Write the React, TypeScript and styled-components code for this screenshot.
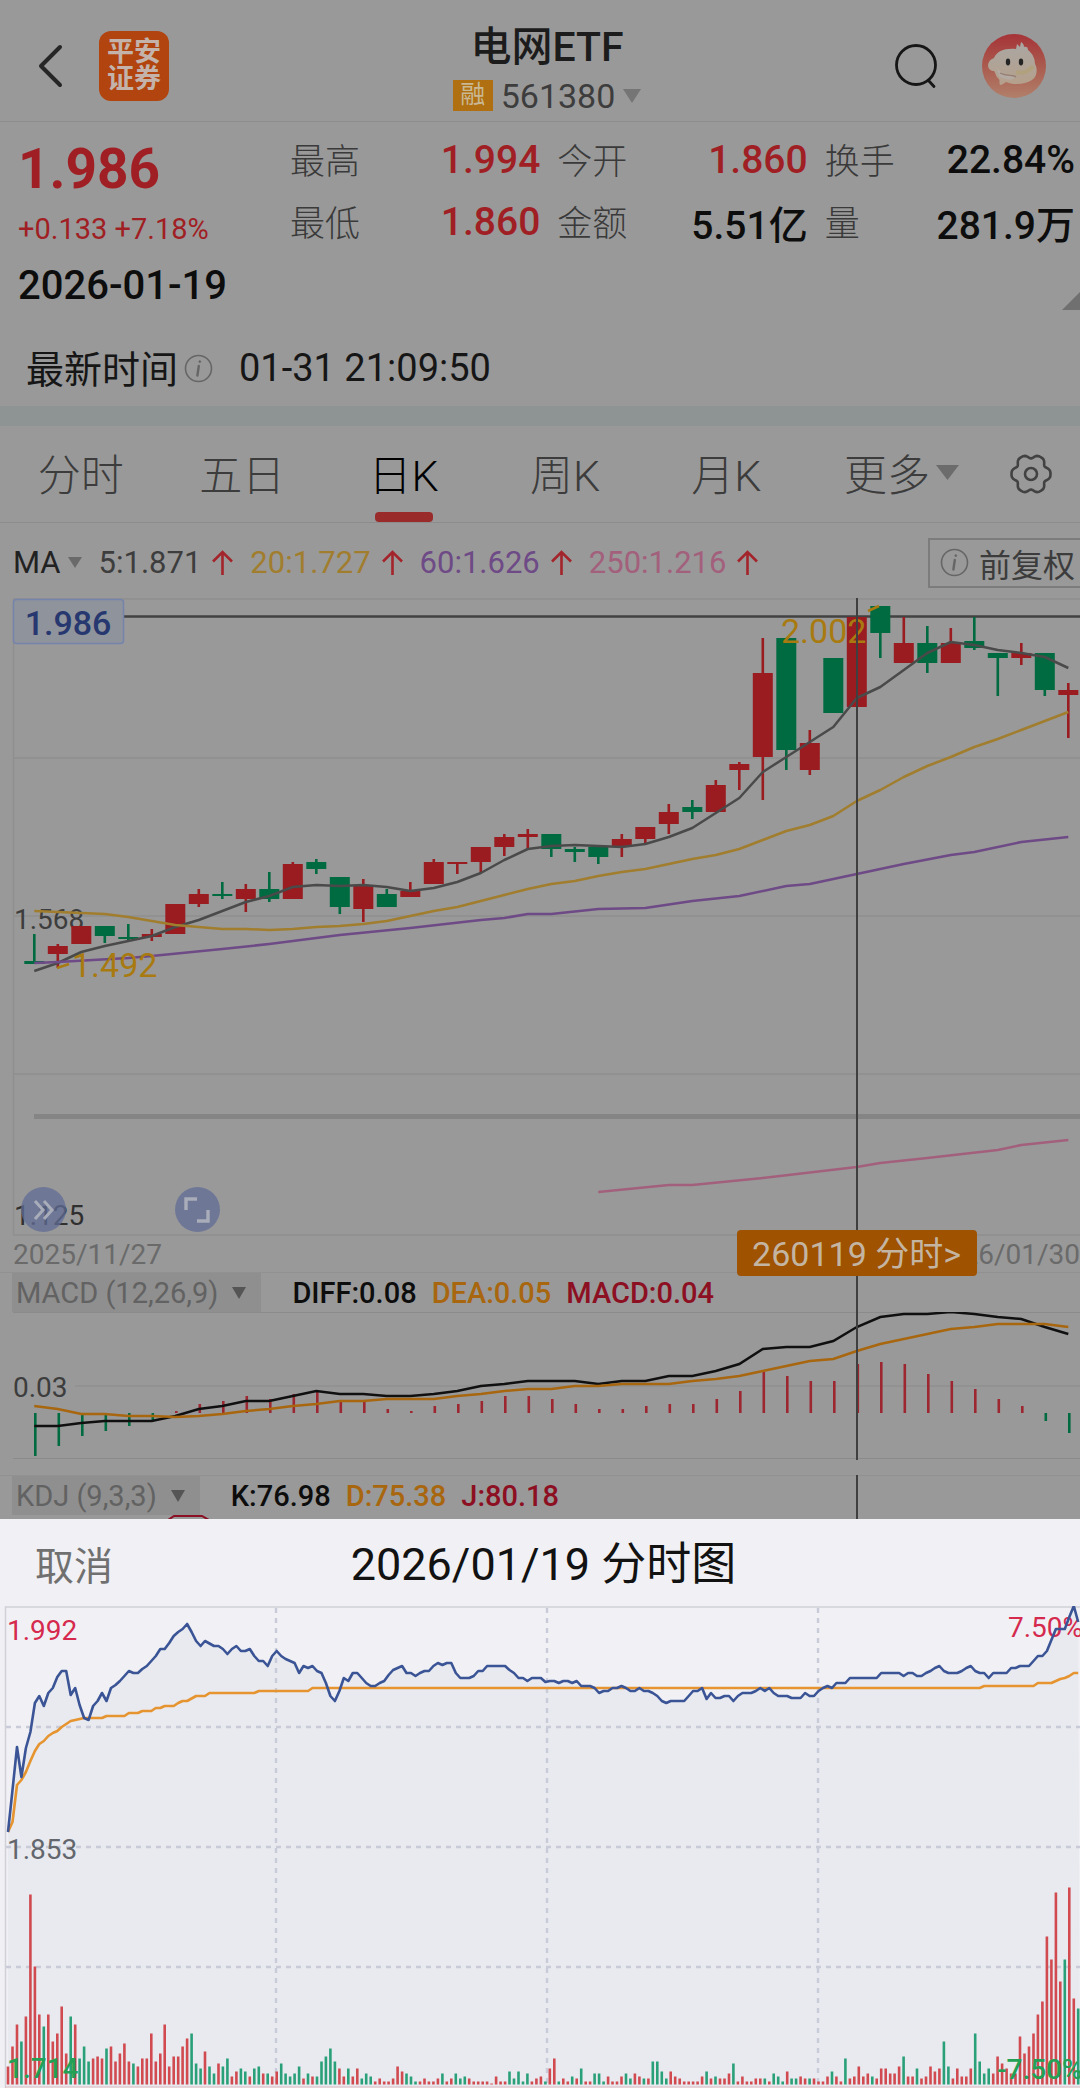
import React from "react";
import styled, { createGlobalStyle, css } from "styled-components";

const color = {
  page: "#999999",
  line: "#8c8c8c",
  ink: "#0d0d0d",
  muted: "#3c3c3c",
  rise: "#9a1c20",
  riseText: "#a01f24",
  fall: "#006b40",
  ma5: "#4a4a4a",
  ma20: "#a17d2e",
  ma60: "#6e4a86",
  ma250: "#a3607c",
  mark: "#a87a10",
  dea: "#a8660f",
  macd: "#8c0f22",
  sheet: "#f1f1f5",
};

const GlobalStyle = createGlobalStyle`
  * { box-sizing: border-box; }
  body {
    margin: 0;
    background: ${color.sheet};
    font-family: Roboto, "Noto Sans CJK SC", sans-serif;
    color: ${color.ink};
  }
  button, select {
    margin: 0;
    padding: 0;
    border: 0;
    background: none;
    color: inherit;
    font: inherit;
    cursor: pointer;
  }
  svg { display: block; }
  h1, h2, p, dl, dt, dd { margin: 0; font-weight: 400; }
`;

/* ---------- market data ---------- */

type Candle = ["R" | "G", number, number, number, number];

// direction, high, body top, body bottom, low
const candles: Candle[] = [
  ["G", 934, 961, 964, 964], ["R", 944, 946, 954, 968], ["R", 926, 926, 944, 944],
  ["G", 926, 926, 936, 943], ["G", 924, 937, 939, 941], ["R", 929, 934, 937, 941],
  ["R", 904, 904, 934, 934], ["R", 889, 894, 904, 907], ["G", 882, 894, 896, 899],
  ["R", 884, 889, 899, 912], ["G", 872, 889, 899, 902], ["R", 862, 864, 899, 899],
  ["G", 859, 862, 869, 874], ["G", 877, 877, 907, 914], ["R", 879, 886, 909, 922],
  ["G", 889, 894, 907, 907], ["R", 882, 891, 897, 897], ["R", 859, 862, 884, 884],
  ["R", 862, 862, 864, 874], ["R", 847, 847, 862, 873], ["R", 834, 837, 847, 856],
  ["R", 829, 834, 837, 849], ["G", 834, 834, 849, 857], ["G", 847, 849, 852, 862],
  ["G", 847, 847, 857, 864], ["R", 834, 839, 847, 857], ["R", 827, 827, 839, 843],
  ["R", 804, 812, 824, 834], ["G", 800, 807, 812, 819], ["R", 780, 785, 812, 812],
  ["R", 762, 764, 770, 790], ["R", 638, 673, 757, 800], ["G", 638, 638, 750, 770],
  ["R", 730, 743, 770, 775], ["G", 658, 658, 713, 713], ["R", 617, 617, 707, 707],
  ["G", 606, 606, 633, 658], ["R", 617, 643, 663, 663], ["G", 626, 643, 663, 673],
  ["R", 628, 643, 663, 663], ["G", 617, 641, 648, 650], ["G", 653, 653, 658, 696],
  ["R", 643, 653, 658, 665], ["G", 653, 653, 690, 696], ["R", 683, 690, 695, 738],
];

const ma5 = [
  971, 963, 952, 946, 941, 936, 927, 920, 911, 902, 896, 887, 885, 886, 885, 887, 891, 888,
  882, 873, 860, 849, 846, 845, 846, 847, 844, 837, 828, 813, 798, 772, 757, 742, 727, 698,
  687, 670, 653, 642, 645, 650, 653, 657, 668,
];
const ma20 = [
  911, 912, 913, 914, 917, 921, 925, 927, 929, 929, 930, 929, 927, 926, 924, 921, 916, 911,
  907, 901, 895, 889, 884, 881, 876, 872, 869, 864, 859, 855, 849, 840, 831, 825, 816, 801,
  790, 777, 766, 757, 747, 739, 730, 721, 712,
];
const ma60: [number, number][] = [
  [0, 963], [1, 962], [4, 958], [5, 956], [8, 949], [10, 944], [13, 935], [16, 928], [19, 920],
  [20, 918], [21, 914], [22, 914], [24, 909], [26, 908], [28, 901], [30, 896], [32, 886],
  [33, 884], [35, 874], [37, 864], [39, 855], [40, 852], [42, 842], [44, 837],
];
const ma250: [number, number][] = [
  [24, 1192], [27, 1185], [28, 1185], [31, 1178], [35, 1167], [36, 1163], [38, 1158],
  [41, 1150], [42, 1145], [44, 1140],
];
const macdBars = [
  1456, 1446, 1436, 1431, 1426, 1420, 1411, 1404, 1401, 1396, 1399, 1394, 1391, 1401, 1401,
  1409, 1411, 1406, 1404, 1401, 1396, 1396, 1399, 1404, 1409, 1409, 1406, 1404, 1404, 1399,
  1391, 1372, 1376, 1381, 1381, 1364, 1362, 1364, 1374, 1381, 1389, 1399, 1406, 1421, 1433,
];
const diff = [
  1426, 1426, 1423, 1421, 1421, 1421, 1416, 1409, 1406, 1401, 1401, 1396, 1391, 1394, 1394,
  1396, 1396, 1394, 1391, 1386, 1384, 1381, 1381, 1381, 1384, 1381, 1381, 1376, 1376, 1371,
  1364, 1349, 1347, 1347, 1341, 1327, 1317, 1314, 1314, 1312, 1314, 1317, 1319, 1327, 1334,
];
const dea = [
  1406, 1409, 1414, 1414, 1416, 1416, 1417, 1416, 1414, 1411, 1409, 1406, 1404, 1401, 1401,
  1399, 1399, 1399, 1396, 1394, 1391, 1389, 1389, 1386, 1386, 1384, 1384, 1384, 1381, 1379,
  1376, 1371, 1366, 1361, 1359, 1351, 1344, 1339, 1334, 1329, 1327, 1324, 1324, 1324, 1327,
];

// minute:level pairs
const parse = (s: string): [number, number][] =>
  s.trim().split(/\s+/).map((p) => p.split(":").map(Number) as [number, number]);

const price = parse(`
0:1832 1:1790 2:1747 3:1777 4:1748 5:1732 6:1703 7:1696 8:1706 9:1693 10:1688 11:1677 12:1671
13:1671 14:1695 15:1688 16:1705 17:1718 18:1720 19:1706 20:1701 21:1693 22:1701 23:1688 24:1685
25:1681 26:1676 27:1671 28:1673 29:1673 30:1669 31:1666 32:1661 33:1656 34:1649 35:1649 36:1643
37:1636 38:1632 39:1629 40:1624 41:1632 42:1641 43:1646 44:1641 46:1646 47:1646 48:1649 49:1654
50:1649 51:1646 52:1651 53:1651 54:1649 55:1656 56:1661 57:1661 58:1666 59:1656 60:1651 61:1656
62:1659 63:1661 64:1663 65:1673 66:1666 67:1668 68:1666 69:1671 70:1673 71:1683 72:1696 73:1701
74:1691 75:1678 76:1681 77:1673 78:1673 79:1678 80:1683 81:1686 82:1686 83:1683 84:1681 85:1675
86:1670 87:1668 88:1666 89:1673 90:1673 91:1676 92:1673 93:1671 94:1671 95:1666 96:1663 97:1665
98:1663 99:1663 100:1673 101:1678 103:1678 104:1676 105:1671 106:1671 107:1666 111:1666 112:1670
113:1673 114:1678 115:1678 116:1681 117:1678 119:1678 120:1682 121:1681 122:1681 123:1683
124:1681 125:1681 126:1683 127:1681 128:1686 130:1686 131:1688 132:1693 133:1691 134:1691
135:1688 136:1688 137:1686 138:1688 139:1691 140:1691 141:1688 142:1691 143:1691 144:1693
145:1696 146:1701 147:1703 148:1701 151:1701 152:1696 153:1691 154:1691 155:1688 156:1699
157:1693 158:1698 159:1698 160:1696 161:1696 162:1701 163:1696 164:1693 166:1693 167:1691
168:1688 169:1691 170:1688 171:1693 172:1696 174:1696 175:1698 177:1698 178:1693 179:1696
180:1696 181:1691 182:1688 183:1686 184:1688 185:1683 187:1683 188:1678 194:1678 195:1673
199:1673 200:1676 201:1673 202:1673 203:1676 204:1676 205:1673 206:1671 207:1668 208:1666
209:1671 210:1673 212:1673 213:1671 214:1668 215:1666 216:1671 217:1673 218:1673 219:1678
220:1673 223:1673 224:1668 225:1668 226:1666 228:1666 229:1661 230:1656 231:1656 232:1651
233:1640 234:1629 236:1629 237:1617 238:1606 239:1622`);

const average = parse(`
0:1832 1:1822 2:1785 3:1780 4:1772 5:1761 6:1751 7:1744 8:1741 9:1736 10:1733 11:1731 12:1727
13:1724 14:1721 15:1720 17:1718 21:1718 22:1716 26:1716 27:1713 29:1713 30:1711 32:1711 33:1708
34:1708 35:1706 37:1706 38:1703 39:1701 40:1701 42:1696 44:1696 45:1693 55:1693 56:1691 67:1691
68:1688 217:1688 218:1686 229:1686 230:1683 233:1683 234:1681 235:1679 236:1678 237:1676
238:1673 239:1673`);

const volume = `
R18 R38 R60 G43 R68 R190 R118 R70 G58 R70 R43 R51 R78 R31 G68 R60 G26 G38 G23 R26 R28 R26 G36
R38 R23 R31 R41 R23 G21 R18 R26 R26 R51 R23 R31 R60 R18 R28 R28 R38 R46 G51 G21 G16 R33 G18 G11
R21 G18 G26 R8 R13 G16 G13 R8 G16 G18 R11 G11 R8 R13 G21 G11 G8 G11 G18 R6 G11 R8 G8 G23 G28
G36 G23 R16 R8 G16 R8 R16 G6 G11 G8 R3 R6 R3 R3 R6 R18 R13 G11 G8 G3 R3 R6 R3 R3 R6 G11 R3 R6
G11 G6 G8 R6 R3 R3 R3 R3 R1 R8 R3 R3 G13 G6 G13 G3 G11 R3 R6 R8 G3 R16 R26 G3 R6 R3 G8 R6 G16
R3 R3 G11 G11 G3 R8 R3 R3 R8 G11 G6 R11 R8 G6 R6 G23 G23 G13 G6 R13 R8 R6 R3 R3 R3 R3 R8 G13 R6
G8 R6 R6 R11 G21 R3 R8 R3 R3 R6 R6 G6 R3 G11 G8 G3 R13 G6 G6 R8 R6 G6 R6 R3 R3 R8 G13 R8 R3 G26
R6 R8 R18 R8 R11 G8 R6 R16 R16 R11 R11 R18 G28 R8 R8 G16 R6 R8 R18 R13 R16 G43 G18 R6 R16 R8 R8
R16 G51 G23 G11 G16 R11 R28 R21 R16 R11 R11 R48 R31 R38 R51 R70 R83 R148 R125 R192 R103 G125
R197 R86 G76`.trim().split(/\s+/);

const DAY = 23.5;
const MINUTE = 4.478;
const dayX = (i: number) => 34.3 + i * DAY;
const minuteX = (k: number) => 8 + k * MINUTE;
const indexed = (ys: number[]) => ys.map((y, i) => [i, y] as [number, number]);
const points = (data: [number, number][], x: (i: number) => number) =>
  data.map(([i, y]) => `${x(i).toFixed(1)},${y}`).join(" ");

const gearPath = (() => {
  const out: string[] = [];
  for (let a = 0; a < 360; a += 5) {
    const t = (a * Math.PI) / 180;
    const r = 18 + 2 * Math.cos(6 * t) - 0.5 * Math.cos(12 * t);
    out.push(`${(22 + r * Math.cos(t)).toFixed(2)} ${(22 + r * Math.sin(t)).toFixed(2)}`);
  }
  return `M${out.join("L")}Z`;
})();

/* ---------- styled parts ---------- */

const Screen = styled.main`
  background: ${color.page};
  overflow: hidden;
`;

const Header = styled.header`
  display: grid;
  grid-template-columns: 1fr auto 1fr;
  align-items: center;
  height: 122px;
  padding: 10px 34px 0;
  border-bottom: 1px solid ${color.line};
`;

const HeaderSide = styled.div<{ $end?: boolean }>`
  display: flex;
  align-items: center;
  gap: ${(p) => (p.$end ? 43 : 33)}px;
  justify-content: ${(p) => (p.$end ? "flex-end" : "flex-start")};
`;

const IconButton = styled.button`
  display: flex;
  align-items: center;
  justify-content: center;
`;

const Logo = styled.a`
  display: flex;
  flex-direction: column;
  align-items: center;
  justify-content: center;
  width: 70px;
  height: 70px;
  border-radius: 12px;
  background: #b1440f;
  color: #c3b3ab;
  font-size: 27px;
  font-weight: 700;
  line-height: 27px;
  text-decoration: none;
`;

const TitleBlock = styled.div`
  display: flex;
  flex-direction: column;
  align-items: center;
  padding: 10px 0 0 14px;
`;

const Title = styled.h1`
  font-size: 41px;
  font-weight: 500;
  line-height: 50px;
  color: #1c1c1c;
`;

const CodeButton = styled.button`
  display: flex;
  align-items: center;
  gap: 8px;
  font-size: 34px;
  line-height: 48px;
  color: #3d3d3d;
`;

const Badge = styled.span`
  width: 40px;
  height: 31px;
  background: #b06f10;
  color: #c9b893;
  font-size: 25px;
  line-height: 30px;
  text-align: center;
`;

const Quote = styled.section`
  display: grid;
  grid-template-columns: 290px 1fr;
  height: 284px;
  align-content: start;
  position: relative;
`;

const PriceColumn = styled.div`
  display: flex;
  flex-direction: column;
  padding: 15px 0 0 18px;
`;

const Price = styled.strong`
  font-size: 55px;
  font-weight: 700;
  line-height: 64px;
  color: ${color.riseText};
`;

const Change = styled.span`
  margin: 8px 0 12px;
  font-size: 29px;
  line-height: 40px;
  color: ${color.riseText};
`;

const QuoteDate = styled.time`
  font-size: 40px;
  font-weight: 500;
  line-height: 50px;
`;

const Stats = styled.dl`
  display: grid;
  grid-template-columns: repeat(3, 1fr);
  grid-auto-rows: 62px;
  column-gap: 17px;
  padding: 7px 5px 0 0;
  align-content: start;
`;

const Stat = styled.div<{ $rise?: boolean }>`
  display: flex;
  justify-content: space-between;
  align-items: center;
  white-space: nowrap;
  dt { padding-bottom: 4px; font-size: 35px; color: #3a3a3a; font-weight: 300; }
  dd { font-size: 39px; font-weight: 500; color: ${(p) => (p.$rise ? color.riseText : color.ink)}; }
`;

const Fold = styled.span`
  position: absolute;
  right: 0;
  top: 170px;
  border: 9px solid transparent;
  border-right-color: #707070;
  border-bottom-color: #707070;
`;

const Latest = styled.p`
  grid-column: 1 / -1;
  display: flex;
  align-items: center;
  height: 74px;
  margin-top: 20px;
  padding-left: 26px;
  font-size: 38px;
  color: #161616;
  span { padding-bottom: 4px; }
  svg { margin: 0 26px 0 6px; }
`;

const Band = styled.div`
  height: 20px;
  background: #8e9394;
`;

const TabBar = styled.nav`
  display: flex;
  height: 97px;
  padding-right: 14px;
  border-bottom: 1px solid ${color.line};
`;

const Tab = styled.button<{ $active?: boolean; $grow?: number }>`
  flex: ${(p) => p.$grow ?? 1} 1 0;
  position: relative;
  display: flex;
  align-items: center;
  justify-content: center;
  gap: 6px;
  padding-bottom: 4px;
  white-space: nowrap;
  font-size: 43px;
  font-weight: 300;
  color: ${(p) => (p.$active ? "#000" : color.muted)};
  ${(p) =>
    p.$active &&
    css`
      &::after {
        content: "";
        position: absolute;
        left: 50%;
        bottom: 0;
        width: 58px;
        height: 10px;
        margin-left: -29px;
        border-radius: 4px;
        background: #992b2b;
      }
    `}
`;

const TabSettings = styled(IconButton)`
  width: 70px;
`;

const MaRow = styled.div`
  display: flex;
  align-items: center;
  height: 75px;
  padding: 4px 0 0 13px;
  font-size: 31px;
  gap: 17px;
`;

const MaValue = styled.span<{ $tone: string }>`
  display: flex;
  align-items: center;
  gap: 11px;
  color: ${(p) => p.$tone};
`;

const Adjust = styled.button`
  display: flex;
  align-items: center;
  gap: 10px;
  height: 50px;
  margin-left: auto;
  padding: 0 5px 0 10px;
  border: 2px solid #7c7c7c;
  border-right: 0;
  font-size: 32px;
  white-space: nowrap;
  color: #3c3c3c;
`;

const Picker = styled.label<{ $boxed?: boolean }>`
  display: inline-flex;
  align-items: center;
  gap: ${(p) => (p.$boxed ? 14 : 7)}px;
  color: ${(p) => (p.$boxed ? "#626262" : "#222")};
  select { appearance: none; field-sizing: content; outline: 0; }
  ${(p) =>
    p.$boxed &&
    css`
      height: 100%;
      margin-left: 12px;
      padding: 0 15px 0 4px;
      background: #8f8f8f;
    `}
`;

const Panel = styled.section`
  position: relative;
`;

const Spacer = styled.div`
  height: 15px;
`;

const Chart = styled.svg`
  width: 100%;
  height: auto;
  overflow: hidden;
`;

const Crosshair = styled.span`
  position: absolute;
  left: 79.26%;
  top: 0;
  bottom: 0;
  width: 2px;
  background: #3f3f3f;
`;

const DateRow = styled.div`
  position: relative;
  display: flex;
  justify-content: space-between;
  align-items: center;
  height: 35px;
  padding-left: 13px;
  font-size: 28px;
  color: #6a6a6a;
`;

const DayTag = styled.button`
  position: absolute;
  z-index: 1;
  left: 68.2%;
  top: -7px;
  width: 240px;
  height: 46px;
  border-radius: 4px;
  background: #9f5200;
  color: #c4b5a3;
  font-size: 34px;
  line-height: 48px;
  white-space: nowrap;
`;

const IndicatorHead = styled.div`
  display: flex;
  align-items: center;
  gap: 15px;
  height: 40px;
  font-size: 29px;
  border-top: 1px solid #919191;
  & > span:first-of-type { margin-left: 16px; }
`;

const Reading = styled.span<{ $tone: string }>`
  font-weight: 500;
  color: ${(p) => p.$tone};
`;

const RoundButton = styled.button<{ $left: string }>`
  position: absolute;
  left: ${(p) => p.$left};
  bottom: 5px;
  display: flex;
  align-items: center;
  justify-content: center;
  width: 45px;
  height: 45px;
  border-radius: 50%;
  background: rgba(96, 108, 150, 0.75);
`;

const Sheet = styled.section`
  background: ${color.sheet};
`;

const SheetHead = styled.header`
  display: grid;
  grid-template-columns: 1fr auto 1fr;
  align-items: center;
  height: 87px;
  padding: 4px 28px 0 35px;
`;

const Cancel = styled.button`
  justify-self: start;
  padding-bottom: 4px;
  font-size: 39px;
  color: #707070;
`;

const SheetTitle = styled.h2`
  font-size: 45px;
  line-height: 60px;
  color: #121212;
`;

/* ---------- small drawings ---------- */

const Triangle = ({ w = 18, h = 14, fill = "#6a6a6a" }) => (
  <svg width={w} height={h} viewBox="0 0 18 14" preserveAspectRatio="none" aria-hidden>
    <path d="M0 0H18L9 14Z" fill={fill} />
  </svg>
);

const Info = () => (
  <svg width="29" height="29" viewBox="0 0 29 29" fill="none" stroke="#666" aria-hidden>
    <circle cx="14.5" cy="14.5" r="13" strokeWidth="1.6" />
    <path d="M14.8 12L13.4 21.5" strokeWidth="2.4" strokeLinecap="round" />
    <circle cx="15.8" cy="7.6" r="0.9" fill="#666" />
  </svg>
);

const UpArrow = () => (
  <svg width="21" height="25" viewBox="0 0 21 25" fill="none" stroke="#a3242a" strokeWidth="2.6" aria-hidden>
    <path d="M10.500 25V2M1 11.500L10.500 2L20 11.500" />
  </svg>
);

const Avatar = () => (
  <svg width="64" height="64" viewBox="0 0 64 64" aria-hidden>
    <defs>
      <linearGradient id="avatarBack" x1="0" y1="0" x2="0" y2="1">
        <stop offset="0" stopColor="#a63338" />
        <stop offset="0.5" stopColor="#aa5a4e" />
        <stop offset="1" stopColor="#b1806a" />
      </linearGradient>
      <linearGradient id="avatarBody" x1="0" y1="0" x2="0" y2="1">
        <stop offset="0" stopColor="#aaa7a4" />
        <stop offset="1" stopColor="#b5a08b" />
      </linearGradient>
    </defs>
    <circle cx="32" cy="32" r="32" fill="url(#avatarBack)" />
    <path
      d="M6 31C7 26 10 25 12 24C15 17 23 14 34 15L35 10C36 11 37 12 38 13L39 8C41 9 42 11 42 13C44 12 46 13 46 16C51 20 53 25 53 30C56 35 55 43 50 46C43 51 30 51 24 48C22 49 20 51 18 51C17 49 18 47 17 45C14 43 14 40 12 37C9 37 6 35 6 31Z"
      fill="url(#avatarBody)"
    />
    <path d="M14 31C16 39 25 41 33 43C31 47 22 46 17 42" fill="#b3aaa3" />
    <path d="M18 39C25 43 31 40 34 43" fill="none" stroke="#957d72" strokeWidth="1.2" />
    <path d="M34 38C40 40 47 38 51 32" fill="none" stroke="#b0a070" strokeWidth="4" opacity="0.6" />
    <ellipse cx="26" cy="28" rx="2.2" ry="3.4" fill="#242424" />
    <ellipse cx="39" cy="28" rx="2.2" ry="3.4" fill="#242424" />
  </svg>
);

const CandleChart = () => (
  <Chart viewBox="0 598 1080 639" role="img" aria-label="日K">
    <g stroke="#8f8f8f" strokeWidth="1.5">
      {[599, 758, 916, 1074, 1235].map((y) => (
        <path key={y} d={`M13 ${y}H1080`} />
      ))}
      <path d="M13.500 599V1235" />
    </g>
    <path d="M34 1116.500H1080" stroke="#858585" strokeWidth="5" />
    <text x="14" y="929" fontSize="28" fill="#3d3d3d">1.568</text>
    <text x="14" y="1225" fontSize="28" fill="#303030">1.125</text>
    <path d="M124 616.500H1080" stroke="#424242" strokeWidth="2.4" />
    {candles.map(([dir, high, top, bottom, low], i) => {
      const fill = dir === "R" ? color.rise : color.fall;
      const x = dayX(i);
      return (
        <g key={i} fill={fill}>
          <rect x={x - 1.3} y={high} width="2.6" height={low - high} />
          <rect x={x - 10} y={top} width="20" height={bottom - top} />
        </g>
      );
    })}
    <g fill="none" strokeWidth="2.5" strokeLinejoin="round">
      <polyline points={points(indexed(ma5), dayX)} stroke={color.ma5} />
      <polyline points={points(indexed(ma20), dayX)} stroke={color.ma20} />
      <polyline points={points(ma60, dayX)} stroke={color.ma60} />
      <polyline points={points(ma250, dayX)} stroke={color.ma250} />
      <path d="M57 968L69 964M868 611L879 606" stroke={color.mark} />
    </g>
    <g fontSize="34" fill={color.mark}>
      <text x="72" y="977">1.492</text>
      <text x="781" y="643">2.002</text>
    </g>
    <rect x="13.500" y="599.500" width="110" height="44" rx="3" fill="#8f939b" stroke="#7683ab" strokeWidth="1.5" />
    <text x="68" y="635" fontSize="34" fontWeight="500" textAnchor="middle" fill="#26386f">1.986</text>
  </Chart>
);

const MacdChart = () => (
  <Chart viewBox="0 1312 1080 148" role="img" aria-label="MACD">
    <path d="M13 1312.500H1080M75 1386H1080M13 1458.500H1080" stroke="#8b8b8b" strokeWidth="1.2" />
    <text x="13" y="1397" fontSize="28" fill="#3d3d3d">0.03</text>
    {macdBars.map((y, i) => (
      <path
        key={i}
        d={`M${dayX(i) + 1} 1413V${y}`}
        stroke={y > 1413 ? color.fall : "#9c2730"}
        strokeWidth="2.6"
      />
    ))}
    <g fill="none" strokeWidth="2.5">
      <polyline points={points(indexed(diff), dayX)} stroke="#101010" />
      <polyline points={points(indexed(dea), dayX)} stroke={color.dea} />
    </g>
  </Chart>
);

const MinuteChart = () => (
  <Chart viewBox="0 1606 1080 482" role="img" aria-label="分时图">
    <polygon points={`8,2087 ${points(price, minuteX)} 1080,2087`} fill="#e8eaef" />
    <path d="M5.500 2088V1607H1080" fill="none" stroke="#cfd0d8" strokeWidth="1.5" />
    <path
      d="M6 1727H1080M6 1847H1080M6 1967H1080M276 1608V2087M547 1608V2087M818 1608V2087"
      stroke="#c9ccd8"
      strokeWidth="2.4"
      strokeDasharray="5 5"
    />
    {volume.map((bar, k) => (
      <path
        key={k}
        d={`M${minuteX(k).toFixed(1)} 2084.500v-${bar.slice(1)}`}
        stroke={bar[0] === "R" ? "#d04a50" : "#2aa079"}
        strokeWidth="2.6"
      />
    ))}
    <path d="M5 2087H1080" stroke="#dcb9bd" strokeWidth="1" />
    <g fontSize="28">
      <text x="7" y="1640" fill="#d52a4e">1.992</text>
      <text x="1008" y="1637" fill="#d52a4e">7.50%</text>
      <text x="7" y="1859" fill="#63666c">1.853</text>
    </g>
    <g fontSize="28" fontWeight="500" fill="#22a155">
      <text x="7" y="2078">1.714</text>
      <text x="997" y="2079">-7.50%</text>
    </g>
    <g fill="none" strokeWidth="2.6" strokeLinejoin="round">
      <polyline points={points(average, minuteX)} stroke="#e59430" />
      <polyline points={points(price, minuteX)} stroke="#3a5496" />
    </g>
  </Chart>
);

/* ---------- page ---------- */

const stats: [string, string, boolean][] = [
  ["最高", "1.994", true], ["今开", "1.860", true], ["换手", "22.84%", false],
  ["最低", "1.860", true], ["金额", "5.51亿", false], ["量", "281.9万", false],
];

const averages: [string, string][] = [
  ["5:1.871", "#3d3d3d"], ["20:1.727", color.ma20], ["60:1.626", color.ma60], ["250:1.216", color.ma250],
];

const tabs = ["分时", "五日", "日K", "周K", "月K"];

export default function App() {
  return (
    <>
      <GlobalStyle />
      <Screen>
        <Header>
          <HeaderSide>
            <IconButton aria-label="返回">
              <svg width="32" height="46" viewBox="0 0 32 46" fill="none" stroke="#262626" strokeWidth="4" strokeLinecap="round" strokeLinejoin="round">
                <path d="M26 4L7 23L26 42" />
              </svg>
            </IconButton>
            <Logo href="#home">
              <span>平安</span>
              <span>证券</span>
            </Logo>
          </HeaderSide>
          <TitleBlock>
            <Title>电网ETF</Title>
            <CodeButton>
              <Badge>融</Badge>
              561380
              <Triangle fill="#757575" />
            </CodeButton>
          </TitleBlock>
          <HeaderSide $end>
            <IconButton aria-label="搜索">
              <svg width="46" height="46" viewBox="0 0 46 46" fill="none" stroke="#161616" strokeWidth="2.8" strokeLinecap="round">
                <circle cx="23" cy="22" r="19.500" />
                <path d="M35.500 37.500L41 43.500" />
              </svg>
            </IconButton>
            <IconButton aria-label="我的">
              <Avatar />
            </IconButton>
          </HeaderSide>
        </Header>

        <Quote>
          <PriceColumn>
            <Price>1.986</Price>
            <Change>+0.133 +7.18%</Change>
            <QuoteDate>2026-01-19</QuoteDate>
          </PriceColumn>
          <Stats>
            {stats.map(([name, value, rise]) => (
              <Stat key={name} $rise={rise}>
                <dt>{name}</dt>
                <dd>{value}</dd>
              </Stat>
            ))}
          </Stats>
          <Fold />
          <Latest>
            <span>最新时间</span>
            <Info />
            <time>01-31 21:09:50</time>
          </Latest>
        </Quote>

        <Band />

        <TabBar>
          {tabs.map((name) => (
            <Tab key={name} $active={name === "日K"}>{name}</Tab>
          ))}
          <Tab $grow={1.17} aria-haspopup="menu">
            更多
            <Triangle w={23} h={15} fill="#6c6c6c" />
          </Tab>
          <TabSettings aria-label="设置">
            <svg width="44" height="44" viewBox="0 0 44 44" fill="none" stroke="#424242" strokeWidth="2.6" strokeLinejoin="round">
              <path d={gearPath} />
              <circle cx="22" cy="22" r="6" />
            </svg>
          </TabSettings>
        </TabBar>

        <MaRow>
          <Picker>
            <select aria-label="主图指标"><option>MA</option></select>
            <Triangle w={14} h={11} />
          </Picker>
          {averages.map(([text, tone]) => (
            <MaValue key={text} $tone={tone}>
              {text}
              <UpArrow />
            </MaValue>
          ))}
          <Adjust>
            <Info />
            前复权
          </Adjust>
        </MaRow>

        <Panel>
          <Panel>
            <CandleChart />
            <RoundButton $left="1.95%" aria-label="快进">
              <svg width="24" height="24" viewBox="0 0 24 24" fill="none" stroke="#a9adb9" strokeWidth="3">
                <path d="M3 3L11 12L3 21M12 3L20 12L12 21" />
              </svg>
            </RoundButton>
            <RoundButton $left="16.2%" aria-label="全屏">
              <svg width="26" height="26" viewBox="0 0 26 26" fill="none" stroke="#a9adb9" strokeWidth="3.400">
                <path d="M2 13V2H13M24 13V24H13" />
              </svg>
            </RoundButton>
          </Panel>
          <DateRow>
            <time>2025/11/27</time>
            <DayTag>260119 分时&gt;</DayTag>
            <time>2026/01/30</time>
          </DateRow>
          <IndicatorHead>
            <Picker $boxed>
              <select aria-label="副图指标一"><option>MACD (12,26,9)</option></select>
              <Triangle w={14} h={12} fill="#555" />
            </Picker>
            <Reading $tone={color.ink}>DIFF:0.08</Reading>
            <Reading $tone={color.dea}>DEA:0.05</Reading>
            <Reading $tone={color.macd}>MACD:0.04</Reading>
          </IndicatorHead>
          <MacdChart />
          <Crosshair />
        </Panel>

        <Spacer />

        <Panel>
          <IndicatorHead>
            <Picker $boxed>
              <select aria-label="副图指标二"><option>KDJ (9,3,3)</option></select>
              <Triangle w={14} h={12} fill="#555" />
            </Picker>
            <Reading $tone={color.ink}>K:76.98</Reading>
            <Reading $tone={color.dea}>D:75.38</Reading>
            <Reading $tone={color.macd}>J:80.18</Reading>
          </IndicatorHead>
          <Chart viewBox="0 0 1080 4" role="img" aria-label="KDJ">
            <path d="M168 5L174 1H202L209 5" fill="none" stroke="#8c1024" strokeWidth="2" />
          </Chart>
          <Crosshair />
        </Panel>
      </Screen>

      <Sheet>
        <SheetHead>
          <Cancel>取消</Cancel>
          <SheetTitle>2026/01/19 分时图</SheetTitle>
        </SheetHead>
        <MinuteChart />
      </Sheet>
    </>
  );
}
